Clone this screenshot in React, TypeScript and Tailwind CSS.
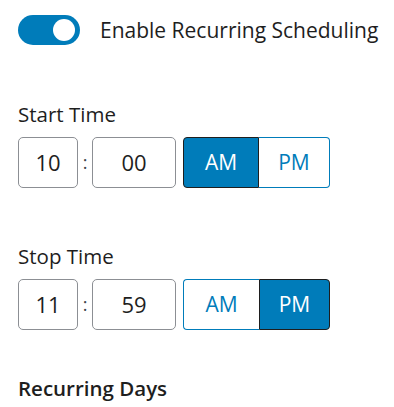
import React from "react";

function TimeRow({ h, m, pm }: { h: string; m: string; pm: boolean }) {
  const active = "bg-[#007cba] text-white border border-[#1e1e1e]";
  const inactive = "bg-white text-[#007cba] border border-[#007cba]";
  return (
    <div className="flex items-center h-[51px]">
      <div className="w-[60px] h-full rounded-[5px] border border-[#8c8f94] flex items-center justify-center text-[22px]">
        {h}
      </div>
      <div className="w-[14px] text-center text-[18px] text-[#3c434a]">:</div>
      <div className="w-[84px] h-full rounded-[5px] border border-[#8c8f94] flex items-center justify-center text-[22px]">
        {m}
      </div>
      <div className="ml-[7px] flex h-full">
        <div
          className={`w-[76px] h-full rounded-l-[4px] flex items-center justify-center text-[21px] ${pm ? inactive + " border-r-0" : active}`}
        >
          AM
        </div>
        <div
          className={`w-[71px] h-full rounded-r-[4px] flex items-center justify-center text-[21px] ${pm ? active : inactive + " border-l-0"}`}
        >
          PM
        </div>
      </div>
    </div>
  );
}

export default function App() {
  return (
    <div className="w-[394px] h-[407px] bg-white pl-[18px] pt-[15px] font-['Open_Sans',sans-serif] text-[#1e1e1e] overflow-hidden">
      <div className="flex items-center h-[30px]">
        <div className="w-[62px] h-[30px] rounded-full bg-[#007cba] flex items-center justify-end pr-[5px]">
          <div className="w-[22px] h-[22px] rounded-full bg-white" />
        </div>
        <span className="ml-[20px] text-[21px] leading-none">Enable Recurring Scheduling</span>
      </div>

      <div className="mt-[55px] text-[20.5px] leading-[28px]">Start Time</div>
      <div className="mt-[9px]">
        <TimeRow h="10" m="00" pm={false} />
      </div>

      <div className="mt-[54px] text-[20.5px] leading-[28px]">Stop Time</div>
      <div className="mt-[9px]">
        <TimeRow h="11" m="59" pm={true} />
      </div>

      <div className="mt-[44px] text-[20.5px] leading-[28px] font-semibold">Recurring Days</div>
    </div>
  );
}
